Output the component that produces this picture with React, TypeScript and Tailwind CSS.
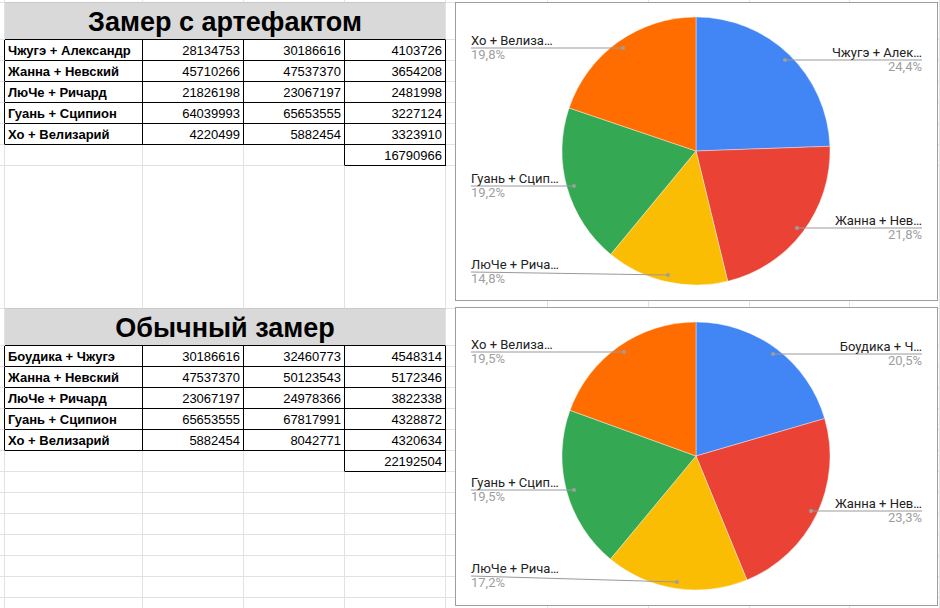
import React from 'react';

const W = [
  'w-[5px]',
  'w-[138px]',
  'w-[101px]',
  'w-[101px]',
  'w-[101px]',
  'w-[102px]',
  'w-[101px]',
  'w-[101px]',
  'w-[100px]',
  'flex-1',
];

type C = 'g' | 'k' | 'd';
const RC: Record<C, string> = {
  g: 'border-r-[#e2e2e2]',
  k: 'border-r-black',
  d: 'border-r-[#e2e2e2]',
};
const BC: Record<C, string> = {
  g: 'border-b-[#e2e2e2]',
  k: 'border-b-black',
  d: 'border-b-[#c9c9c9]',
};

function Cell({
  w,
  r = 'g',
  b = 'g',
  className = '',
  children,
}: {
  w: string;
  r?: C;
  b?: C;
  className?: string;
  children?: React.ReactNode;
}) {
  return (
    <div className={`${w} shrink-0 h-full border-r border-b ${RC[r]} ${BC[b]} ${className}`}>
      {children}
    </div>
  );
}

const nameCls = 'flex items-end pb-[2px] pl-[3px] font-bold text-[13px] leading-[15px] text-black whitespace-nowrap';
const numCls = 'flex items-end justify-end pb-[2px] pr-[3px] text-[13px] leading-[15px] text-black whitespace-nowrap';

function Rest({ from }: { from: number }) {
  return (
    <>
      {W.slice(from).map((w, i) => (
        <Cell key={i} w={w} />
      ))}
    </>
  );
}

function EmptyRow({ h, dark = false }: { h: string; dark?: boolean }) {
  return (
    <div className={`flex ${h}`}>
      <Cell w={W[0]} />
      <Cell w={W[1]} b={dark ? 'd' : 'g'} />
      <Cell w={W[2]} b={dark ? 'd' : 'g'} />
      <Cell w={W[3]} b={dark ? 'd' : 'g'} />
      <Cell w={W[4]} b={dark ? 'd' : 'g'} />
      <Rest from={5} />
    </div>
  );
}

function TitleRow({ title }: { title: string }) {
  return (
    <div className="flex h-[37px]">
      <Cell w={W[0]} />
      <Cell
        w="w-[441px]"
        b="k"
        className="flex items-center justify-center pt-[2px] bg-[#d9d9d9] text-[27px] font-bold text-black whitespace-nowrap"
      >
        {title}
      </Cell>
      <Rest from={5} />
    </div>
  );
}

function DataRow({ d }: { d: [string, number, number, number] }) {
  return (
    <div className="flex h-[21px]">
      <Cell w={W[0]} r="k" />
      <Cell w={W[1]} r="k" b="k" className={nameCls}>
        {d[0]}
      </Cell>
      <Cell w={W[2]} r="k" b="k" className={numCls}>
        {d[1]}
      </Cell>
      <Cell w={W[3]} r="k" b="k" className={numCls}>
        {d[2]}
      </Cell>
      <Cell w={W[4]} r="k" b="k" className={numCls}>
        {d[3]}
      </Cell>
      <Rest from={5} />
    </div>
  );
}

function TotalRow({ v }: { v: number }) {
  return (
    <div className="flex h-[21px]">
      <Cell w={W[0]} />
      <Cell w={W[1]} />
      <Cell w={W[2]} />
      <Cell w={W[3]} r="k" />
      <Cell w={W[4]} r="k" b="k" className={numCls}>
        {v}
      </Cell>
      <Rest from={5} />
    </div>
  );
}

type Label = { t: string; p: string; s: 'l' | 'r'; ly: number; dx: number; dy: number };

const COLORS = ['#4285f4', '#ea4335', '#fbbc04', '#34a853', '#ff6d01'];

function Pie({ vals, labels }: { vals: number[]; labels: Label[] }) {
  const cx = 241;
  const cy = 149;
  const r = 134;
  const total = vals.reduce((a, b) => a + b, 0);
  let a = -Math.PI / 2;
  const paths = vals.map((v) => {
    const a0 = a;
    const a1 = a + (v / total) * Math.PI * 2;
    a = a1;
    const x0 = cx + r * Math.cos(a0);
    const y0 = cy + r * Math.sin(a0);
    const x1 = cx + r * Math.cos(a1);
    const y1 = cy + r * Math.sin(a1);
    const large = a1 - a0 > Math.PI ? 1 : 0;
    return `M ${cx} ${cy} L ${x0} ${y0} A ${r} ${r} 0 ${large} 1 ${x1} ${y1} Z`;
  });
  return (
    <svg
      className="absolute -left-px -top-px font-['Roboto',Arial,sans-serif]"
      width={483}
      height={299}
      viewBox="0 0 483 299"
    >
      {paths.map((d, i) => (
        <path key={i} d={d} fill={COLORS[i]} stroke="#ffffff" strokeWidth={0.4} />
      ))}
      {labels.map((l, i) => {
        const left = l.s === 'l';
        const tx = left ? 16 : 467;
        return (
          <g key={i}>
            <line
              x1={left ? 16 : l.dx}
              y1={left ? l.ly : l.dy}
              x2={left ? l.dx : 467}
              y2={left ? l.dy : l.ly}
              stroke="#999999"
              strokeWidth={1}
            />
            <circle cx={l.dx} cy={l.dy} r={2} fill="#9e9e9e" />
            <text x={tx} y={l.ly - 3.3} fontSize={13} fill="#222222" textAnchor={left ? 'start' : 'end'}>
              {l.t}
            </text>
            <text x={tx} y={l.ly + 11} fontSize={13} fill="#9e9e9e" textAnchor={left ? 'start' : 'end'}>
              {l.p}
            </text>
          </g>
        );
      })}
    </svg>
  );
}

const T1: [string, number, number, number][] = [
  ['Чжугэ + Александр', 28134753, 30186616, 4103726],
  ['Жанна + Невский', 45710266, 47537370, 3654208],
  ['ЛюЧе + Ричард', 21826198, 23067197, 2481998],
  ['Гуань + Сципион', 64039993, 65653555, 3227124],
  ['Хо + Велизарий', 4220499, 5882454, 3323910],
];

const T2: [string, number, number, number][] = [
  ['Боудика + Чжугэ', 30186616, 32460773, 4548314],
  ['Жанна + Невский', 47537370, 50123543, 5172346],
  ['ЛюЧе + Ричард', 23067197, 24978366, 3822338],
  ['Гуань + Сципион', 65653555, 67817991, 4328872],
  ['Хо + Велизарий', 5882454, 8042771, 4320634],
];

const L1: Label[] = [
  { t: 'Хо + Велиза…', p: '19,8%', s: 'l', ly: 46, dx: 168, dy: 46 },
  { t: 'Чжугэ + Алек…', p: '24,4%', s: 'r', ly: 58, dx: 330, dy: 58 },
  { t: 'Гуань + Сцип…', p: '19,2%', s: 'l', ly: 184, dx: 119, dy: 184 },
  { t: 'ЛюЧе + Рича…', p: '14,8%', s: 'l', ly: 270, dx: 213, dy: 273 },
  { t: 'Жанна + Нев…', p: '21,8%', s: 'r', ly: 226, dx: 342, dy: 226 },
];

const L2: Label[] = [
  { t: 'Хо + Велиза…', p: '19,5%', s: 'l', ly: 45, dx: 169, dy: 45 },
  { t: 'Боудика + Ч…', p: '20,5%', s: 'r', ly: 47, dx: 318, dy: 47 },
  { t: 'Гуань + Сцип…', p: '19,5%', s: 'l', ly: 183, dx: 119, dy: 183 },
  { t: 'ЛюЧе + Рича…', p: '17,2%', s: 'l', ly: 269, dx: 222, dy: 275 },
  { t: 'Жанна + Нев…', p: '23,3%', s: 'r', ly: 204, dx: 356, dy: 204 },
];

export default function App() {
  return (
    <div className="relative w-[940px] h-[608px] overflow-hidden bg-white font-['Liberation_Sans',Arial,sans-serif]">
      <div className="flex flex-col">
        <EmptyRow h="h-[3px]" dark />
        <TitleRow title="Замер с артефактом" />
        {T1.map((d, i) => (
          <DataRow key={i} d={d} />
        ))}
        <TotalRow v={16790966} />
        <EmptyRow h="h-[143px]" dark />
        <TitleRow title="Обычный замер" />
        {T2.map((d, i) => (
          <DataRow key={i} d={d} />
        ))}
        <TotalRow v={22192504} />
        {[0, 1, 2, 3, 4, 5, 6].map((i) => (
          <EmptyRow key={i} h="h-[21px]" />
        ))}
      </div>

      <div className="absolute left-[455px] top-[2px] w-[483px] h-[299px] border border-[#9e9e9e] bg-white">
        <Pie vals={T1.map((d) => d[3])} labels={L1} />
      </div>
      <div className="absolute left-[455px] top-[307px] w-[483px] h-[299px] border border-[#9e9e9e] bg-white">
        <Pie vals={T2.map((d) => d[3])} labels={L2} />
      </div>
    </div>
  );
}
